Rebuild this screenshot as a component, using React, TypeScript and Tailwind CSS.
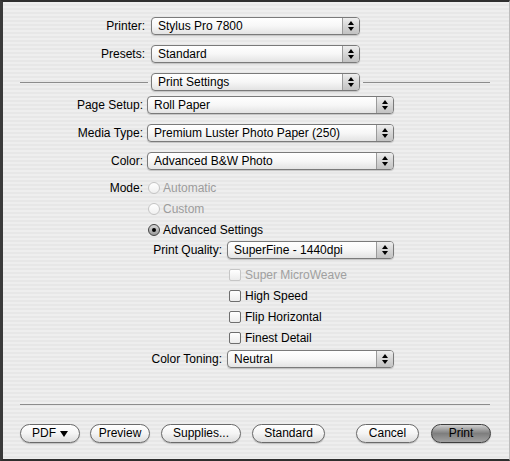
import React from 'react';

const font = { fontFamily: '"Liberation Sans", Arial, sans-serif' };

function Arrows() {
  return (
    <span className="flex w-[17px] flex-col items-center justify-center gap-[2px] border-l border-[#9a9a9a] bg-gradient-to-b from-[#eeeeee] via-[#d6d6d6] to-[#c2c2c2]">
      <span className="h-0 w-0 border-x-[3px] border-b-[4px] border-x-transparent border-b-black" />
      <span className="h-0 w-0 border-x-[3px] border-t-[4px] border-x-transparent border-t-black" />
    </span>
  );
}

function Popup({ text, className }: { text: string; className: string }) {
  return (
    <div
      className={`flex h-[18px] items-stretch overflow-hidden rounded-[4px] border border-[#7a7a7a] bg-gradient-to-b from-white via-[#f7f7f7] to-[#e3e3e3] shadow-[0_1px_1px_rgba(0,0,0,0.18)] ${className}`}
    >
      <span className="flex-1 truncate pl-[6px] text-[12px] leading-[16px] text-black">{text}</span>
      <Arrows />
    </div>
  );
}

function Label({ text, className }: { text: string; className: string }) {
  return <span className={`shrink-0 text-right text-[12px] leading-[18px] text-black ${className}`}>{text}</span>;
}

function Radio({ label, checked, disabled }: { label: string; checked?: boolean; disabled?: boolean }) {
  return (
    <div className="flex h-[18px] items-center gap-[3px]">
      <span
        className={`flex h-[12px] w-[12px] items-center justify-center rounded-full border bg-gradient-to-b ${
          disabled ? 'border-[#c4c4c4] from-white to-[#f0f0f0]' : 'border-[#444] from-[#d8d8d8] to-[#9a9a9a]'
        }`}
      >
        {checked && <span className="h-[4px] w-[4px] rounded-full bg-black" />}
      </span>
      <span className={`text-[12px] leading-[18px] ${disabled ? 'text-[#9c9c9c]' : 'text-black'}`}>{label}</span>
    </div>
  );
}

function Check({ label, disabled }: { label: string; disabled?: boolean }) {
  return (
    <div className="flex h-[18px] items-center gap-[4px] pl-[226px]">
      <span
        className={`h-[12px] w-[12px] rounded-[2px] border bg-gradient-to-b from-white to-[#ececec] ${
          disabled ? 'border-[#c6c6c6]' : 'border-[#6e6e6e]'
        }`}
      />
      <span className={`text-[12px] leading-[18px] ${disabled ? 'text-[#a0a0a0]' : 'text-black'}`}>{label}</span>
    </div>
  );
}

function Button({ children, className, primary }: { children: React.ReactNode; className: string; primary?: boolean }) {
  return (
    <div
      className={`flex h-[19px] items-center justify-center rounded-full border text-[12px] leading-[17px] text-black shadow-[0_1px_1px_rgba(0,0,0,0.2)] ${
        primary
          ? 'border-[#3e3e3e] bg-gradient-to-b from-[#cfcfcf] via-[#7e7e7e] to-[#a2a2a2]'
          : 'border-[#6a6a6a] bg-gradient-to-b from-white via-[#f4f4f4] to-[#dcdcdc]'
      } ${className}`}
    >
      {children}
    </div>
  );
}

export default function App() {
  return (
    <div
      style={font}
      className="flex h-[461px] w-[510px] flex-col border-t-2 border-b-2 border-l-[3px] border-r border-t-[#2e2e2e] border-b-[#2e2e2e] border-l-[#3a3a3a] border-r-[#bdbdbd] bg-[repeating-linear-gradient(180deg,#eeeeee_0px,#eeeeee_2px,#e7e7e7_2px,#e7e7e7_4px)]"
    >
      {/* Printer & presets */}
      <div className="mt-[15px] flex items-center gap-[6px]">
        <Label text="Printer:" className="w-[142px]" />
        <Popup text="Stylus Pro 7800" className="w-[209px]" />
      </div>
      <div className="mt-[10px] flex items-center gap-[6px]">
        <Label text="Presets:" className="w-[142px]" />
        <Popup text="Standard" className="w-[209px]" />
      </div>

      {/* Pane selector */}
      <div className="mt-[10px] flex items-center gap-[3px] pl-[17px]">
        <span className="h-px w-[128px] bg-[#8c8c8c]" />
        <Popup text="Print Settings" className="w-[209px]" />
        <span className="h-px w-[127px] bg-[#8c8c8c]" />
      </div>

      {/* Settings */}
      <div className="mt-[5px] flex items-center gap-[4px]">
        <Label text="Page Setup:" className="w-[140px]" />
        <Popup text="Roll Paper" className="w-[247px]" />
      </div>
      <div className="mt-[10px] flex items-center gap-[4px]">
        <Label text="Media Type:" className="w-[140px]" />
        <Popup text="Premium Luster Photo Paper (250)" className="w-[247px]" />
      </div>
      <div className="mt-[10px] flex items-center gap-[4px]">
        <Label text="Color:" className="w-[140px]" />
        <Popup text="Advanced B&W Photo" className="w-[247px]" />
      </div>

      <div className="mt-[9px] flex items-start gap-[5px]">
        <Label text="Mode:" className="w-[140px]" />
        <div className="flex flex-col gap-[3px]">
          <Radio label="Automatic" disabled />
          <Radio label="Custom" disabled />
          <Radio label="Advanced Settings" checked />
        </div>
      </div>

      <div className="mt-[2px] flex items-center gap-[5px]">
        <Label text="Print Quality:" className="w-[219px]" />
        <Popup text="SuperFine - 1440dpi" className="w-[167px]" />
      </div>

      <div className="mt-[7px] flex flex-col gap-[3px]">
        <Check label="Super MicroWeave" disabled />
        <Check label="High Speed" />
        <Check label="Flip Horizontal" />
        <Check label="Finest Detail" />
      </div>

      <div className="mt-[3px] flex items-center gap-[5px]">
        <Label text="Color Toning:" className="w-[219px]" />
        <Popup text="Neutral" className="w-[167px]" />
      </div>

      {/* Footer */}
      <div className="ml-[17px] mt-[36px] h-px w-[470px] bg-[#8c8c8c]" />
      <div className="mt-[19px] flex items-center pl-[17px]">
        <Button className="w-[60px] gap-[4px]">
          PDF
          <span className="h-0 w-0 border-x-[4px] border-t-[6px] border-x-transparent border-t-black" />
        </Button>
        <Button className="ml-[10px] w-[60px]">Preview</Button>
        <Button className="ml-[11px] w-[80px]">Supplies...</Button>
        <Button className="ml-[11px] w-[73px]">Standard</Button>
        <Button className="ml-[31px] w-[63px]">Cancel</Button>
        <Button className="ml-[12px] w-[60px]" primary>
          Print
        </Button>
      </div>
    </div>
  );
}
